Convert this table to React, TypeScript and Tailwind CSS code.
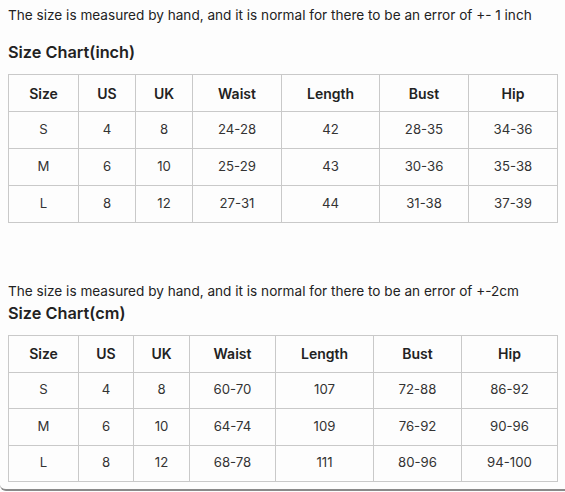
import React from 'react';

const headers = ['Size', 'US', 'UK', 'Waist', 'Length', 'Bust', 'Hip'];

const inchRows = [
  ['S', '4', '8', '24-28', '42', '28-35', '34-36'],
  ['M', '6', '10', '25-29', '43', '30-36', '35-38'],
  ['L', '8', '12', '27-31', '44', '31-38', '37-39'],
];

const cmRows = [
  ['S', '4', '8', '60-70', '107', '72-88', '86-92'],
  ['M', '6', '10', '64-74', '109', '76-92', '90-96'],
  ['L', '8', '12', '68-78', '111', '80-96', '94-100'],
];

function SizeTable({ rows, widths, rowClass }: { rows: string[][]; widths: number[]; rowClass: string }) {
  return (
    <table className="border-collapse table-fixed w-[549px]">
      <colgroup>
        {widths.map((w, i) => (
          <col key={i} style={{ width: w }} />
        ))}
      </colgroup>
      <thead>
        <tr className={rowClass}>
          {headers.map((h) => (
            <th key={h} className="border border-[#c9c9c9] text-[14px] font-semibold text-[#222] text-center p-0">
              {h}
            </th>
          ))}
        </tr>
      </thead>
      <tbody>
        {rows.map((r, i) => (
          <tr key={i} className={rowClass}>
            {r.map((c, j) => (
              <td key={j} className="border border-[#c9c9c9] text-[13.2px] text-[#333] text-center p-0">
                {c}
              </td>
            ))}
          </tr>
        ))}
      </tbody>
    </table>
  );
}

export default function App() {
  return (
    <div className="w-[565px] h-[492px] overflow-hidden bg-[#fdfdfd] font-['Inter',sans-serif]">
      <div className="h-[491px] border-b-2 border-[#8a8a8a] rounded-bl-md pl-2">
        <p className="pt-[5px] text-[13.6px] leading-[20px] text-[#222]">
          The size is measured by hand, and it is normal for there to be an error of +- 1 inch
        </p>
        <h2 className="mt-[15px] text-[16.3px] leading-[24px] font-semibold text-[#222]">Size Chart(inch)</h2>
        <div className="mt-[10px]">
          <SizeTable rows={inchRows} widths={[70, 57, 57, 89, 98, 89, 89]} rowClass="h-[37px]" />
        </div>
        <p className="mt-[58px] text-[13.6px] leading-[20px] text-[#222]">
          The size is measured by hand, and it is normal for there to be an error of +-2cm
        </p>
        <h2 className="text-[16.3px] leading-[24px] font-semibold text-[#222]">Size Chart(cm)</h2>
        <div className="mt-[10px]">
          <SizeTable rows={cmRows} widths={[70, 55, 56, 86, 98, 88, 96]} rowClass="h-[36.5px]" />
        </div>
      </div>
    </div>
  );
}
